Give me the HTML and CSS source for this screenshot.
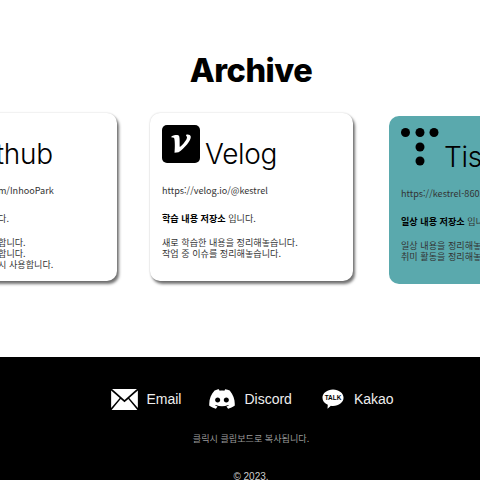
FILE: index.html
```html
<!DOCTYPE html>
<html lang="ko">

<head>
    <title>Archive</title>
    <meta charset="UTF-8">
    <meta name="viewport" content="width=device-width, initial-scale=1.0">
    <link rel="stylesheet" href="styles.css">
</head>

<body>
    <section class="archive">
        <h1 class="archive-title">Archive</h1>
        <div class="card-row">
            <div class="card">
                <div class="card-head">
                    <svg class="card-icon" viewBox="0 0 38 38"><rect width="38" height="38" rx="5" fill="#000" /></svg>
                    <span class="card-name">Github</span>
                </div>
                <p class="card-link">https://github.com/InhooPark</p>
                <p class="card-lead"><b>작업물 저장소</b> 입니다.</p>
                <p class="card-text">연습한 코드를 저장합니다.<br>작업한 코드를 저장합니다.<br>필요한 코드들을 다시 사용합니다.</p>
            </div>
            <div class="card">
                <div class="card-head">
                    <svg class="card-icon" viewBox="0 0 38 38">
                        <rect width="38" height="38" rx="5" fill="#000" />
                        <path transform="translate(-.5 1.2) scale(1 .87)" d="M10 11.5 C13 10 16.5 9.5 17.5 11 C18.5 13.5 18 20 18.3 24 C22 20.5 25.2 16 25.5 13 C25.6 11.5 24.5 11.5 24.5 10 C26 9 29 9.5 29.3 12 C29.6 16.5 23 25 17 30 L13 30.5 C13.5 25 13.5 17 12.8 14 C12.4 12.8 11 12.8 10 13 Z" fill="#fff" />
                    </svg>
                    <span class="card-name">Velog</span>
                </div>
                <p class="card-link">https://velog.io/@kestrel</p>
                <p class="card-lead"><b>학습 내용 저장소</b> 입니다.</p>
                <p class="card-text">새로 학습한 내용을 정리해놓습니다.<br>작업 중 이슈를 정리해놓습니다.</p>
            </div>
            <div class="card card-tistory">
                <div class="card-head">
                    <svg class="card-icon" viewBox="0 0 38 38">
                        <circle cx="4.5" cy="4.5" r="4.5" />
                        <circle cx="19" cy="4.5" r="4.5" />
                        <circle cx="33" cy="4.5" r="4.5" />
                        <circle cx="19" cy="19" r="4.5" />
                        <circle cx="19" cy="33" r="4.5" />
                    </svg>
                    <span class="card-name">Tistory</span>
                </div>
                <p class="card-link">https://kestrel-860.tistory.com</p>
                <p class="card-lead"><b>일상 내용 저장소</b> 입니다.</p>
                <p class="card-text">일상 내용을 정리해놓습니다.<br>취미 활동을 정리해놓습니다.</p>
            </div>
        </div>
    </section>
    <footer class="footer">
        <div class="contact-row">
            <div class="contact">
                <svg viewBox="0 0 28 22" width="27" height="21">
                    <path d="M1 0 H27 L14 11.5 Z" fill="#fff" />
                    <path d="M0 1.5 L9 9.5 L0 20 Z M28 1.5 L19 9.5 L28 20 Z" fill="#fff" />
                    <path d="M10 10.5 L14 14 L18 10.5 L27.5 22 H.5 Z" fill="#fff" />
                </svg>
                <span>Email</span>
            </div>
            <div class="contact contact-discord">
                <svg viewBox="1.7 0 24.6 21.7" width="26" height="20" preserveAspectRatio="none">
                    <path fill-rule="evenodd" fill="#fff" d="M7 1.7 C9 .8 10.5 .4 11 .3 L11.8 1.8 C13.3 1.6 14.7 1.6 16.2 1.8 L17 .3 C18.5 .6 20 1 21.3 1.7 C25 7 26.5 12.5 26 18.3 C24 19.8 22 20.8 19.8 21.4 L18.2 18.9 C19 18.6 19.8 18.2 20.5 17.8 L19.9 17.3 C16 19.2 12 19.2 8.1 17.3 L7.5 17.8 C8.2 18.2 9 18.6 9.8 18.9 L8.2 21.4 C6 20.8 4 19.8 2 18.3 C1.5 12 3.2 6.5 7 1.7 Z M9.9 9.3 C8.5 9.3 7.5 10.5 7.5 12 C7.5 13.5 8.5 14.7 9.9 14.7 C11.3 14.7 12.3 13.5 12.3 12 C12.3 10.5 11.3 9.3 9.9 9.3 Z M18.1 9.3 C16.7 9.3 15.7 10.5 15.7 12 C15.7 13.5 16.7 14.7 18.1 14.7 C19.5 14.7 20.5 13.5 20.5 12 C20.5 10.5 19.5 9.3 18.1 9.3 Z" />
                </svg>
                <span>Discord</span>
            </div>
            <div class="contact contact-kakao">
                <svg viewBox="0 0 24 24" width="22" height="22">
                    <path fill="#fff" d="M12 1.5 C18.4 1.5 23.5 5.5 23.5 10.5 C23.5 15.5 18.4 19.5 12 19.5 C11.2 19.5 10.4 19.4 9.7 19.3 L6 22.5 L6.3 18.2 C2.8 16.7 .5 13.8 .5 10.5 C.5 5.5 5.6 1.5 12 1.5 Z" />
                    <text x="12" y="13" class="talk-text">TALK</text>
                </svg>
                <span>Kakao</span>
            </div>
        </div>
        <p class="footer-note">클릭시 클립보드로 복사됩니다.</p>
        <p class="footer-copy">© 2023.</p>
    </footer>
</body>

</html>
```

FILE: styles.css
```css
html {
    margin: 0px;
    padding: 0px;
    height: 100%;
    overflow: hidden;
}

body {
    margin: 0px;
    padding: 0px;
    width: 502px;
    height: 100%;
    display: flex;
    flex-direction: column;
    background-color: #fff;
    color: #000;
    font-family: "Noto Sans CJK KR", sans-serif;
}

.archive {
    height: 357px;
    overflow: hidden;
}

.archive-title {
    margin: 0px;
    padding-top: 51px;
    height: 62px;
    line-height: 40px;
    text-align: center;
    font-family: "Inter", sans-serif;
    font-size: 32.5px;
    font-weight: 800;
    letter-spacing: -0.5px;
}

.card-row {
    display: flex;
    align-items: flex-start;
    gap: 33px;
    margin-left: -86px;
}

.card {
    flex: none;
    width: 203px;
    height: 168px;
    box-sizing: border-box;
    padding: 12px 12px;
    background-color: #fff;
    border-radius: 10px;
    box-shadow: 2px 3px 3px rgba(0, 0, 0, 0.55), 0px 0px 2px rgba(0, 0, 0, 0.2);
}

.card-tistory {
    margin-top: 3px;
    margin-left: 3px;
    background-color: #5aa9ad;
    box-shadow: none;
}

.card-head {
    display: flex;
    align-items: flex-end;
    gap: 5px;
    height: 42px;
}

.card-icon {
    flex: none;
    width: 38px;
    height: 38px;
    margin-bottom: 4px;
}

.card-name {
    margin-bottom: -4px;
    font-family: "Inter", sans-serif;
    font-size: 28px;
    font-weight: 300;
    line-height: 34px;
    letter-spacing: -0.3px;
}

.card p {
    margin: 0px;
    font-size: 9.1px;
    line-height: 11px;
    color: #333;
}

.card .card-link {
    margin-top: 18px;
}

.card .card-lead {
    margin-top: 17px;
}

.card .card-text {
    margin-top: 13px;
}

.card-lead b {
    color: #000;
    font-weight: 700;
}

.footer {
    flex: 1;
    background-color: #000;
    color: #fff;
    text-align: center;
    overflow: hidden;
}

.contact-row {
    display: flex;
    justify-content: center;
    align-items: center;
    gap: 28px;
    padding-top: 30px;
    padding-left: 3px;
}

.contact {
    display: flex;
    align-items: center;
    gap: 8px;
    font-family: "Liberation Sans", sans-serif;
    font-size: 14px;
    line-height: 24px;
    color: #eee;
}

.contact-discord {
    gap: 9px;
}

.contact-kakao {
    gap: 10px;
}

.contact-kakao svg {
    margin-left: 2px;
}

.talk-text {
    font-family: "Liberation Sans", sans-serif;
    font-size: 7px;
    font-weight: 700;
    text-anchor: middle;
    fill: #000;
}

.footer-note {
    margin: 21px 0px 0px;
    font-size: 9.1px;
    line-height: 13px;
    color: #999;
}

.footer-copy {
    margin: 26px 0px 0px;
    font-family: "Liberation Sans", sans-serif;
    font-size: 10px;
    line-height: 12px;
    color: #ccc;
}
```
